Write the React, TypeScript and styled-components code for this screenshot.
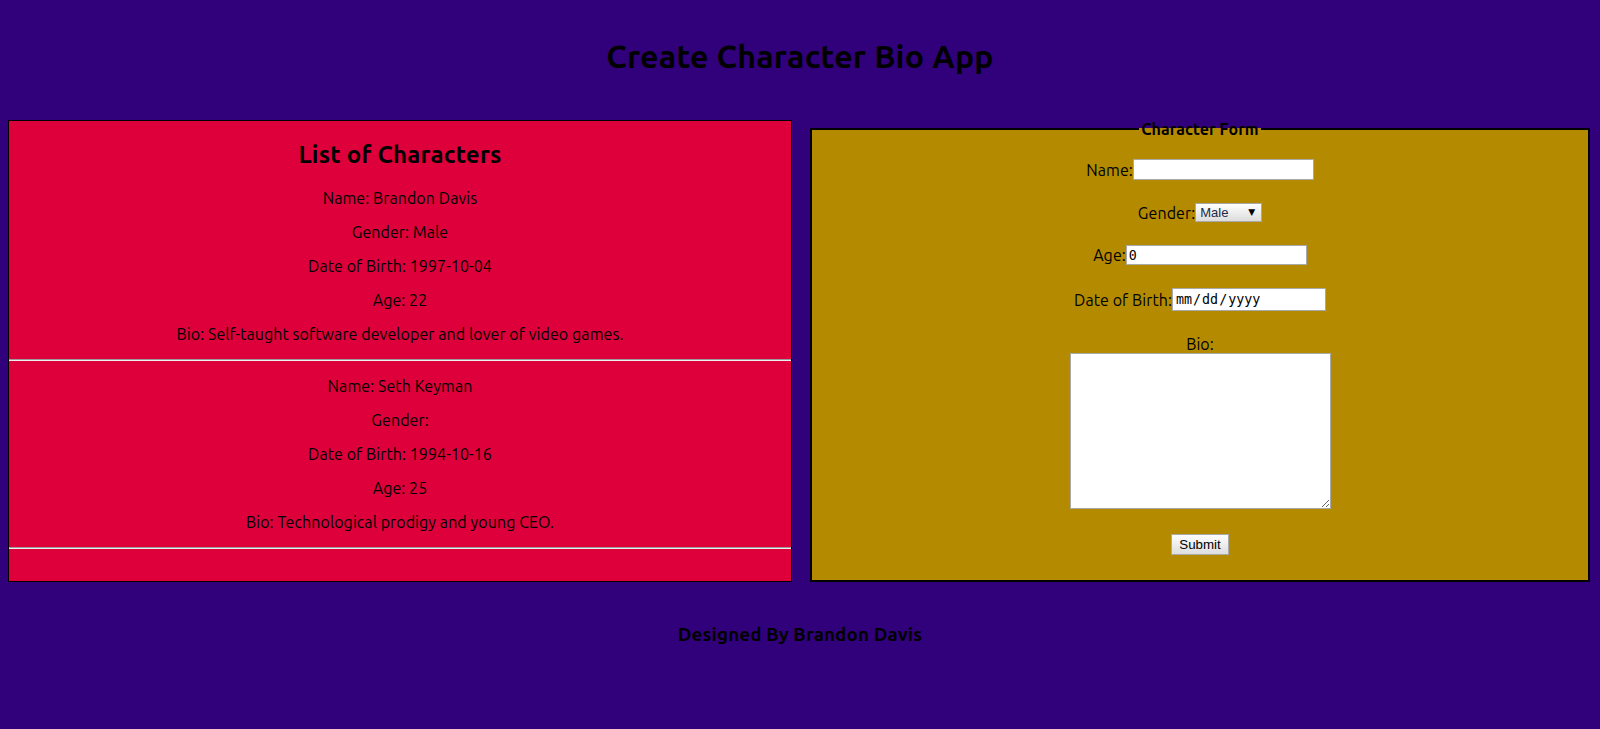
import React from "react";
import styled, { createGlobalStyle } from "styled-components";

const Global = createGlobalStyle`
  html, body {
    margin: 0;
    padding: 0;
    background: #31007b;
    min-height: 100%;
  }
  body {
    font-family: Ubuntu, Lato, "Liberation Sans", sans-serif;
    color: #000;
    letter-spacing: 0.08px;
  }
`;

const Page = styled.div`
  padding: 0 8px;
  min-height: 729px;
  box-sizing: border-box;
`;

const Header = styled.header`
  padding: 38px 0 46px;
  text-align: center;
`;

const Title = styled.h1`
  margin: 0;
  font-size: 32px;
  line-height: 36px;
  font-weight: 700;
  letter-spacing: 0.26px;
`;

const Columns = styled.main`
  display: grid;
  grid-template-columns: 1fr 1fr;
  gap: 16px;
  align-items: stretch;
`;

const ListPanel = styled.section`
  background: #dd003b;
  border: 1px solid #000;
  text-align: center;
`;

const ListTitle = styled.h2`
  margin: 20px 0 20px;
  font-size: 24px;
  line-height: 28px;
  font-weight: 700;
  letter-spacing: 0.22px;
`;

const Info = styled.p`
  margin: 16px 0;
  font-size: 16px;
  line-height: 18px;
`;

const Divider = styled.hr`
  margin: 8px 0;
  border: none;
  border-top: 1px solid #9a9a9a;
  border-bottom: 1px solid #eeeeee;
  height: 0;
`;

const FormSet = styled.fieldset`
  margin: 0 2px;
  padding: 0 12px 25px;
  border: 2px solid #000;
  background: #b48a00;
  min-width: 0;
`;

const Legend = styled.legend`
  margin: 0 auto;
  padding: 0 2px;
  font-size: 16px;
  line-height: 18px;
  font-weight: 700;
`;

const Form = styled.form`
  display: flex;
  flex-direction: column;
  align-items: center;
  gap: 23px;
  padding-top: 21px;
`;

const Row = styled.div`
  display: flex;
  align-items: center;
  justify-content: center;
  font-size: 16px;
  line-height: 18px;
`;

const Stack = styled.div`
  display: flex;
  flex-direction: column;
  align-items: center;
  font-size: 16px;
  line-height: 18px;
  padding: 1px 0 2px;
`;

const TextInput = styled.input<{ $w: number; $h: number }>`
  box-sizing: border-box;
  width: ${(p) => p.$w}px;
  height: ${(p) => p.$h}px;
  margin: 0;
  padding: 1px 2px;
  border: 1px solid #a9a9a9;
  background: #fff;
  font-family: "DejaVu Sans Mono", monospace;
  font-size: 13.33px;
  letter-spacing: 0;
  color: #000;
  outline: none;
  &::-webkit-calendar-picker-indicator {
    display: none;
  }
`;

const SelectWrap = styled.span`
  position: relative;
  display: inline-flex;
`;

const Select = styled.select`
  appearance: none;
  -webkit-appearance: none;
  box-sizing: border-box;
  width: 67px;
  height: 19px;
  margin: 0;
  padding: 0 0 0 4px;
  border: 1px solid #a9a9a9;
  border-radius: 0;
  background: linear-gradient(#ffffff, #dcdcdc);
  font-family: "Liberation Sans", Arial, sans-serif;
  font-size: 13px;
  letter-spacing: 0;
  color: #1b2a4a;
`;

const Arrow = styled.span`
  position: absolute;
  right: 7px;
  top: 2px;
  font-size: 9px;
  line-height: 14px;
  pointer-events: none;
  color: #000;
  font-family: "DejaVu Sans", sans-serif;
`;

const TextArea = styled.textarea`
  box-sizing: border-box;
  width: 261px;
  height: 156px;
  margin: 0;
  border: 1px solid #a9a9a9;
  background: #fff;
  outline: none;
`;

const Button = styled.button`
  box-sizing: border-box;
  width: 58px;
  height: 21px;
  padding: 0;
  border: 1px solid #a9a9a9;
  border-radius: 0;
  background: linear-gradient(#fdfdfd, #dedede);
  font-family: "Liberation Sans", Arial, sans-serif;
  font-size: 13.33px;
  letter-spacing: 0;
  color: #000;
`;

const Footer = styled.footer`
  padding-top: 42px;
  text-align: center;
`;

const Credit = styled.h3`
  margin: 0;
  font-size: 18.72px;
  line-height: 22px;
  font-weight: 700;
  letter-spacing: 0.18px;
`;

type Character = {
  name: string;
  gender: string;
  dob: string;
  age: number;
  bio: string;
};

const characters: Character[] = [
  {
    name: "Brandon Davis",
    gender: "Male",
    dob: "1997-10-04",
    age: 22,
    bio: "Self-taught software developer and lover of video games.",
  },
  {
    name: "Seth Keyman",
    gender: "",
    dob: "1994-10-16",
    age: 25,
    bio: "Technological prodigy and young CEO.",
  },
];

export default function App() {
  return (
    <>
      <Global />
      <Page>
        <Header>
          <Title>Create Character Bio App</Title>
        </Header>
        <Columns>
          <ListPanel>
            <ListTitle>List of Characters</ListTitle>
            {characters.map((c) => (
              <div key={c.name}>
                <Info>Name: {c.name}</Info>
                <Info>Gender: {c.gender}</Info>
                <Info>Date of Birth: {c.dob}</Info>
                <Info>Age: {c.age}</Info>
                <Info>Bio: {c.bio}</Info>
                <Divider />
              </div>
            ))}
          </ListPanel>
          <FormSet>
            <Legend>Character Form</Legend>
            <Form onSubmit={(e) => e.preventDefault()}>
              <Row>
                <label htmlFor="name">Name:</label>
                <TextInput id="name" type="text" $w={181} $h={21} />
              </Row>
              <Row>
                <label htmlFor="gender">Gender:</label>
                <SelectWrap>
                  <Select id="gender" defaultValue="Male">
                    <option>Male</option>
                    <option>Female</option>
                  </Select>
                  <Arrow>▼</Arrow>
                </SelectWrap>
              </Row>
              <Row>
                <label htmlFor="age">Age:</label>
                <TextInput id="age" type="number" defaultValue={0} $w={181} $h={20} />
              </Row>
              <Row>
                <label htmlFor="dob">Date of Birth:</label>
                <TextInput id="dob" type="date" $w={154} $h={23} />
              </Row>
              <Stack>
                <label htmlFor="bio">Bio:</label>
                <TextArea id="bio" />
              </Stack>
              <Button type="submit">Submit</Button>
            </Form>
          </FormSet>
        </Columns>
        <Footer>
          <Credit>Designed By Brandon Davis</Credit>
        </Footer>
      </Page>
    </>
  );
}
